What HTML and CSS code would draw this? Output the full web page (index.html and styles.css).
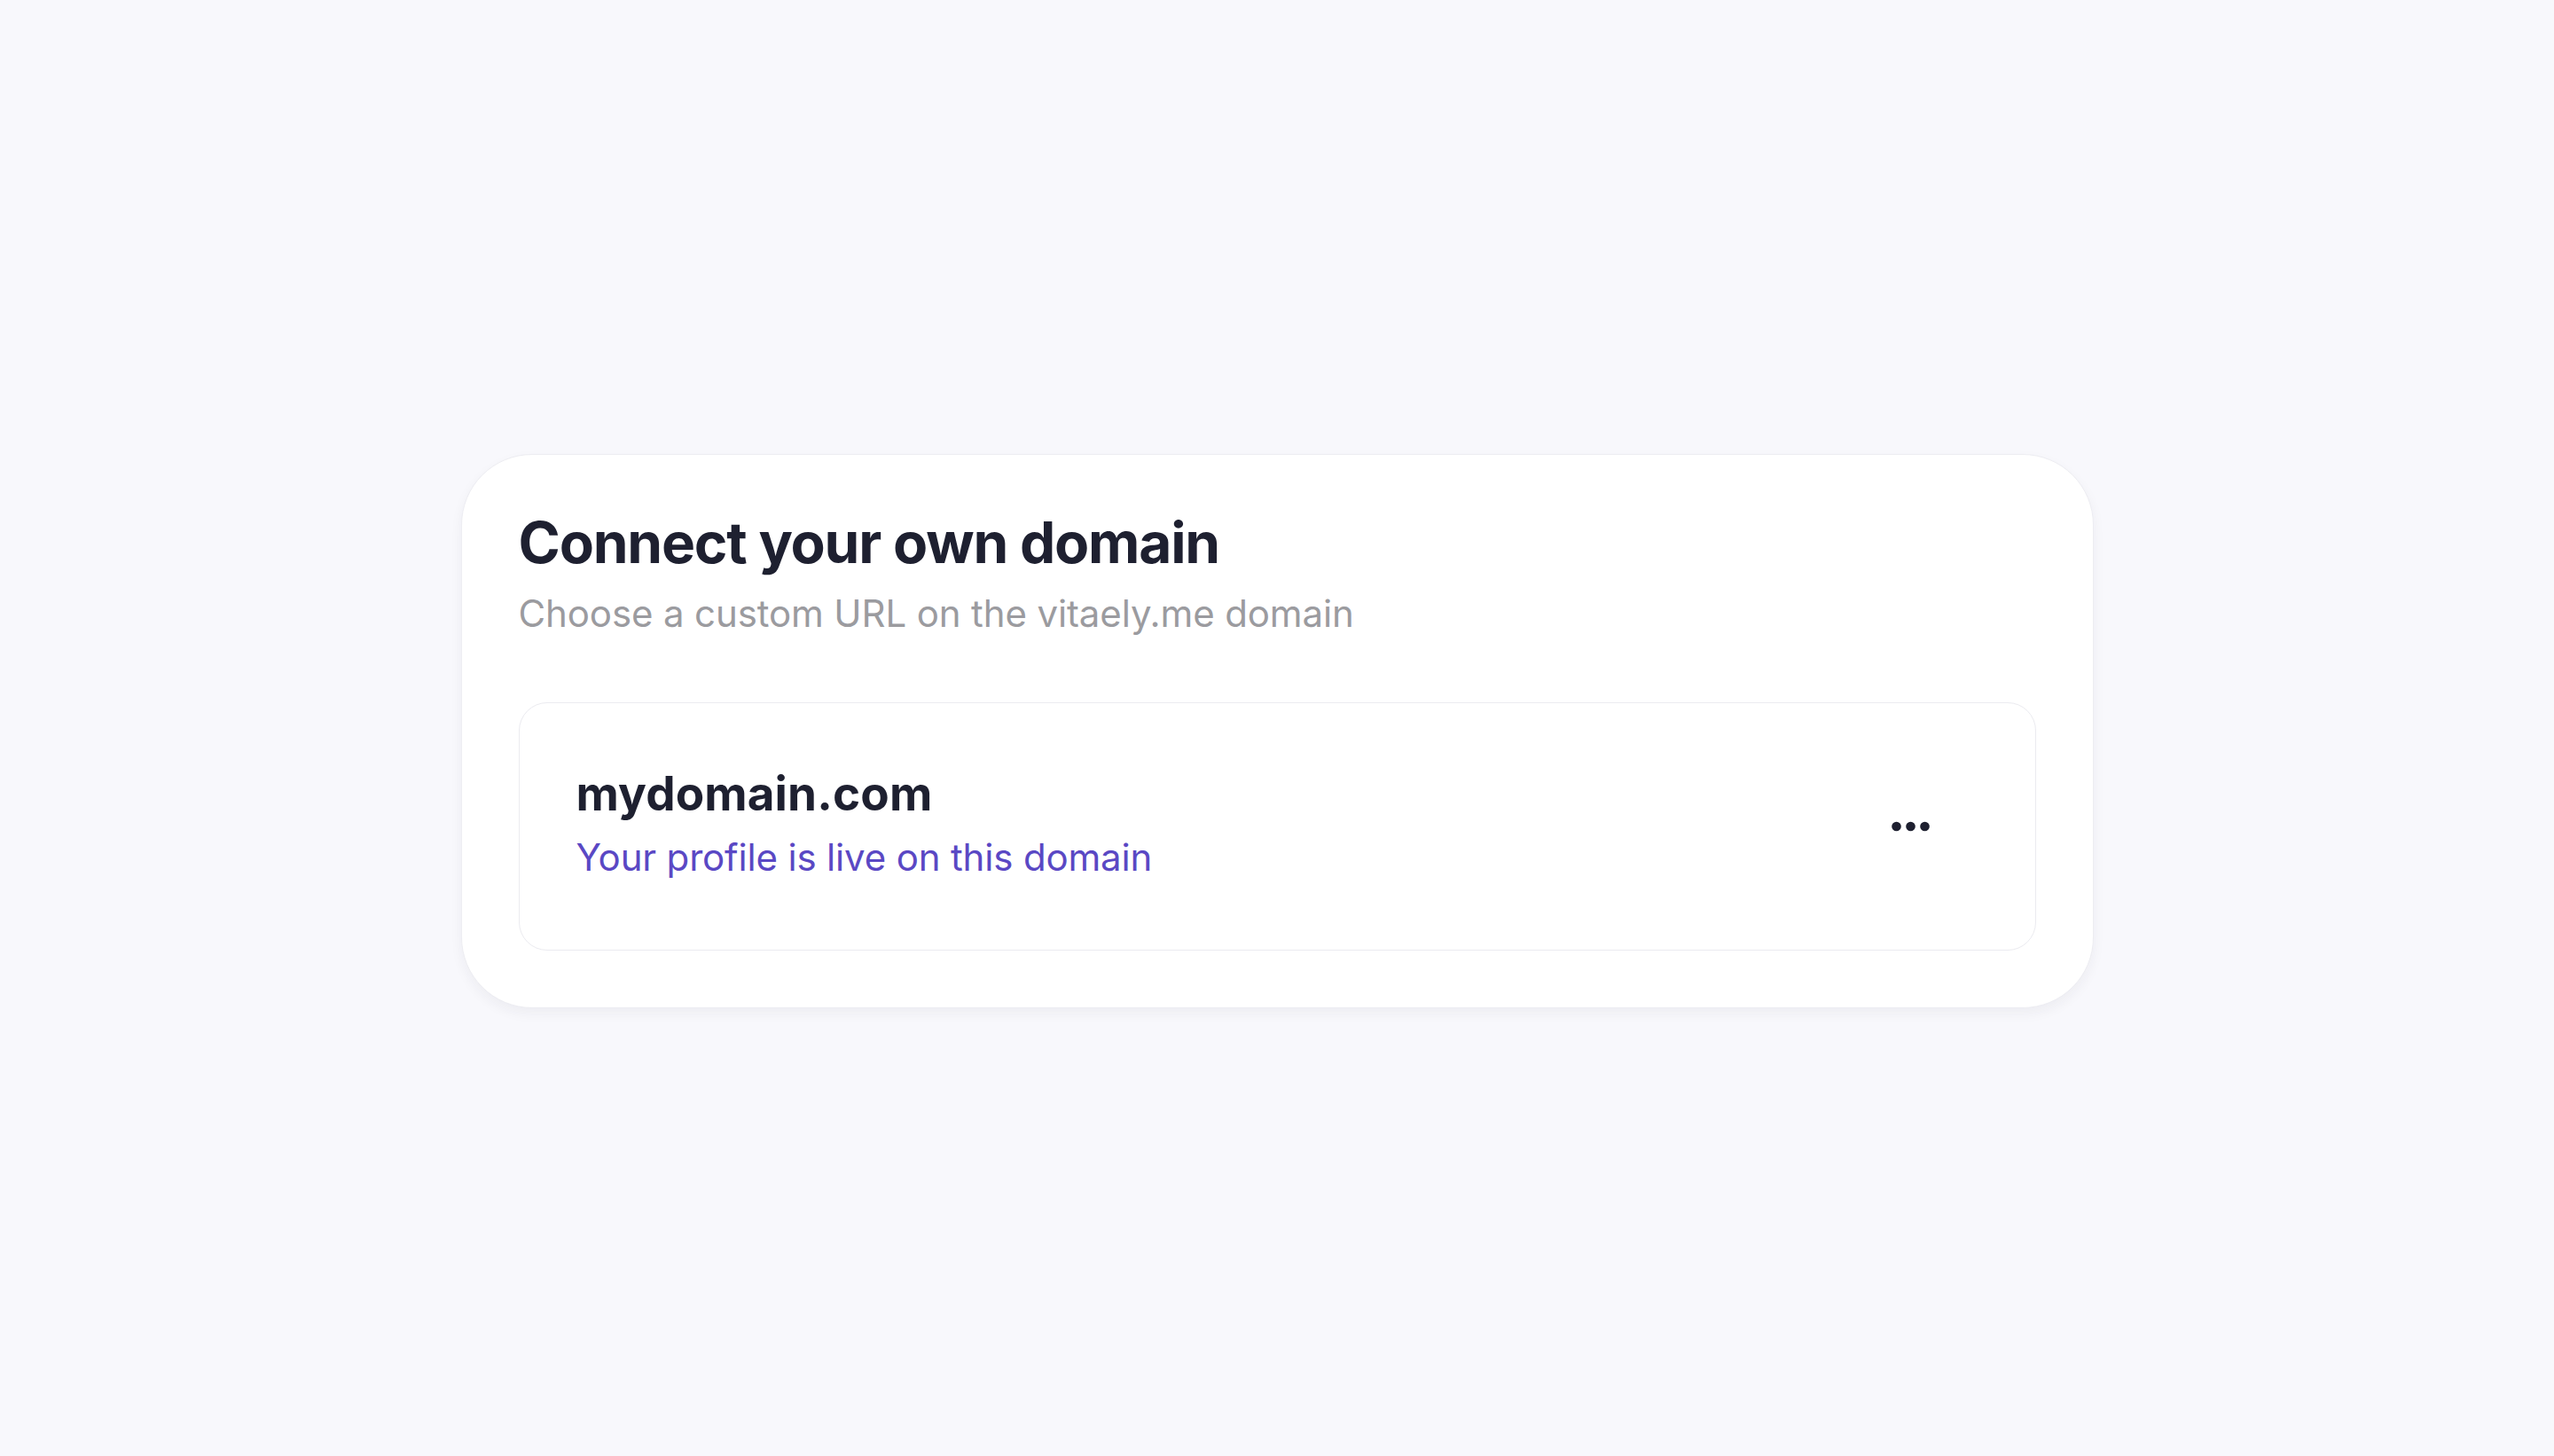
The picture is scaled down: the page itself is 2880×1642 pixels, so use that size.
FILE: index.html
```html
<!DOCTYPE html>
<html lang="en">
<head>
<meta charset="utf-8">
<title>Connect your own domain</title>
<link rel="stylesheet" href="styles.css">
</head>
<body>
<main class="page">
  <section class="card">
    <h1 class="card-title">Connect your own domain</h1>
    <p class="card-subtitle">Choose a custom URL on the vitaely.me domain</p>
    <div class="domain-row">
      <div class="domain-info">
        <div class="domain-name">mydomain.com</div>
        <div class="domain-status">Your profile is live on this domain</div>
      </div>
      <button class="more-btn" type="button" aria-label="More options">
        <svg width="44" height="12" viewBox="0 0 44 12" aria-hidden="true">
          <circle cx="5.5" cy="6" r="5.3" fill="#1e2030"/>
          <circle cx="21.5" cy="6" r="5.3" fill="#1e2030"/>
          <circle cx="37.5" cy="6" r="5.3" fill="#1e2030"/>
        </svg>
      </button>
    </div>
  </section>
</main>
</body>
</html>
```

FILE: styles.css
```css
* {
  box-sizing: border-box;
}

html, body {
  margin: 0;
  padding: 0;
}

body {
  background: #f8f8fc;
  font-family: "Inter", "Noto Sans", "Liberation Sans", sans-serif;
  color: #1e2030;
}

.page {
  min-height: 100vh;
  display: flex;
  align-items: center;
  justify-content: center;
  padding-top: 7px;
}

.card {
  width: 1841px;
  background: #ffffff;
  border: 1px solid #ededf2;
  border-radius: 80px;
  padding: 64px;
  box-shadow: 0 6px 14px rgba(30, 32, 60, 0.05);
}

.card-title {
  margin: -3px 0 0;
  font-size: 64px;
  line-height: 1.2;
  font-weight: 700;
  letter-spacing: -0.019em;
  color: #1e2030;
}

.card-subtitle {
  margin: 9px 0 0;
  font-size: 42px;
  line-height: 1.5;
  font-weight: 400;
  letter-spacing: -0.003em;
  color: #9b9b9f;
}

.domain-row {
  margin-top: 69px;
  border: 1px solid #ebebf0;
  border-radius: 32px;
  height: 280px;
  padding: 0 64px;
  display: flex;
  align-items: center;
  justify-content: space-between;
}

.domain-info {
  display: flex;
  flex-direction: column;
  gap: 8px;
  margin-top: -2px;
}

.domain-name {
  font-size: 53px;
  line-height: 1.2;
  font-weight: 700;
  letter-spacing: 0.002em;
  color: #1e2030;
}

.domain-status {
  font-size: 42px;
  line-height: 1.5;
  font-weight: 400;
  letter-spacing: -0.004em;
  color: #5a48c4;
}

.more-btn {
  border: 0;
  background: transparent;
  padding: 0;
  margin-right: 54px;
  display: flex;
  align-items: center;
  cursor: pointer;
}

.more-btn svg {
  display: block;
}
```
